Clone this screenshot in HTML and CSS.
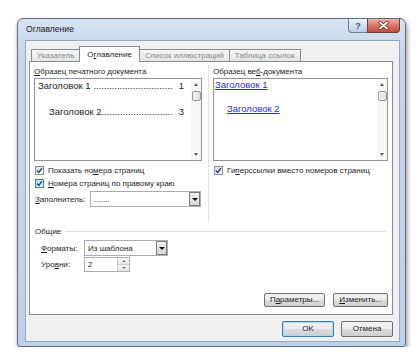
FILE: index.html
```html
<!DOCTYPE html>
<html lang="ru">
<head>
    <meta charset="UTF-8">
    <meta name="viewport" content="width=device-width, initial-scale=1">
    <title>Оглавление</title>
    <link rel="stylesheet" href="styles.css">
</head>
<body>

<div class="dialog">
    <div class="titlebar">
        <span class="title">Оглавление</span>
        <div class="caption-buttons">
            <span class="cap-btn help">?</span>
            <span class="cap-btn close">
                <svg width="11" height="9" viewBox="0 0 11 9">
                    <path d="M2 1.5 L9 7.5 M9 1.5 L2 7.5" stroke="#6b2b22" stroke-width="3.4" stroke-linecap="round"/>
                    <path d="M2 1.5 L9 7.5 M9 1.5 L2 7.5" stroke="#ffffff" stroke-width="1.8" stroke-linecap="round"/>
                </svg>
            </span>
        </div>
    </div>

    <div class="client">
        <div class="tabs">
            <div class="tab">Указатель</div>
            <div class="tab active">О<u>г</u>лавление</div>
            <div class="tab">Список иллюстраций</div>
            <div class="tab">Таблица ссылок</div>
        </div>

        <div class="panel">
            <div class="columns">
                <!-- Print preview -->
                <div class="col-print">
                    <div class="label"><u>О</u>бразец печатного документа</div>
                    <div class="preview">
                        <div class="preview-text">
                            <div class="toc-line"><span>Заголовок 1 ..............................</span><span>1</span></div>
                            <div class="toc-line level2"><span>Заголовок 2...........................</span><span>3</span></div>
                        </div>
                        <div class="scrollbar">
                            <span class="arrow up"></span>
                            <span class="thumb"></span>
                            <span class="arrow down"></span>
                        </div>
                    </div>
                    <div class="check first">
                        <span class="box"><svg width="7" height="7" viewBox="0 0 7 7"><path d="M1 3.6 L2.8 5.4 L6 1.2" stroke="#24418a" stroke-width="1.4" fill="none"/></svg></span>
                        Показать но<u>м</u>ера страниц
                    </div>
                    <div class="check">
                        <span class="box focus"><svg width="7" height="7" viewBox="0 0 7 7"><path d="M1 3.6 L2.8 5.4 L6 1.2" stroke="#24418a" stroke-width="1.4" fill="none"/></svg></span>
                        <span><u>Н</u>омера страниц по правому краю</span>
                    </div>
                    <div class="field-row filler">
                        <span class="field-label"><u>З</u>аполнитель:</span>
                        <div class="combo wide">
                            <span>.......</span>
                            <span class="combo-btn"><span class="tri"></span></span>
                        </div>
                    </div>
                </div>

                <!-- Web preview -->
                <div class="col-web">
                    <div class="label">Образец ве<u>б</u>-документа</div>
                    <div class="preview">
                        <div class="preview-text web">
                            <div class="web-link">Заголовок 1</div>
                            <div class="web-link level2">Заголовок 2</div>
                        </div>
                        <div class="scrollbar">
                            <span class="arrow up"></span>
                            <span class="thumb"></span>
                            <span class="arrow down"></span>
                        </div>
                    </div>
                    <div class="check first">
                        <span class="box"><svg width="7" height="7" viewBox="0 0 7 7"><path d="M1 3.6 L2.8 5.4 L6 1.2" stroke="#24418a" stroke-width="1.4" fill="none"/></svg></span>
                        <span>Ги<u>п</u>ерссылки вместо номеров страниц</span>
                    </div>
                </div>
            </div>

            <div class="general">
                <div class="group-title">Общие</div>
                <div class="field-row general-row">
                    <span class="field-label short"><u>Ф</u>орматы:</span>
                    <div class="combo formats">
                        <span>Из шаблона</span>
                        <span class="combo-btn"><span class="tri"></span></span>
                    </div>
                </div>
                <div class="field-row general-row levels">
                    <span class="field-label short">Уро<u>в</u>ни:</span>
                    <div class="spin">
                        <span>2</span>
                        <span class="spin-btns">
                            <span class="spin-btn"><span class="tri-up"></span></span>
                            <span class="spin-btn"><span class="tri-down"></span></span>
                        </span>
                    </div>
                </div>
            </div>

            <div class="panel-buttons">
                <button class="btn">П<u>а</u>раметры...</button>
                <button class="btn"><u>И</u>зменить...</button>
            </div>
        </div>

        <div class="dialog-buttons">
            <button class="btn btn-main default">OK</button>
            <button class="btn btn-main">Отмена</button>
        </div>
    </div>
</div>

</body>
</html>
```

FILE: styles.css
```css
body {
    margin: 0;
    background-color: #ffffff;
    font-family: "Liberation Sans", Arial, sans-serif;
    font-size: 8px;
    color: #1e1e1e;
}

u {
    text-decoration-thickness: 1px;
}

/* Window frame */
.dialog {
    box-sizing: border-box;
    width: 389px;
    height: 329px;
    margin: 18px 0 0 17px;
    display: flex;
    flex-direction: column;
    background: linear-gradient(#d6e3f2, #c3d6ec 40px, #bdd2ea);
    border: 1px solid #5d6e84;
    border-radius: 6px 6px 3px 3px;
    box-shadow: 1px 3px 5px rgba(0, 0, 0, 0.45);
}

.titlebar {
    height: 21px;
    display: flex;
    align-items: flex-start;
    padding-left: 8px;
}

.title {
    font-size: 8.6px;
    line-height: 21px;
    color: #1a1a1a;
}

.caption-buttons {
    margin-left: auto;
    margin-right: 5px;
    display: flex;
}

.cap-btn {
    box-sizing: border-box;
    height: 14px;
    display: flex;
    align-items: center;
    justify-content: center;
    border: 1px solid #6e7f94;
    border-top: none;
}

.help {
    width: 19px;
    border-right: none;
    border-radius: 0 0 0 4px;
    background: linear-gradient(#eef3f9, #d3dfed 50%, #bccde3);
    color: #44566f;
    font-size: 9px;
    font-weight: bold;
}

.close {
    width: 33px;
    border-color: #7a3a32;
    border-radius: 0 0 4px 0;
    background: linear-gradient(#ebb3a8, #d77a66 50%, #c4493a);
}

/* Client area */
.client {
    flex: 1;
    margin: 0 5px 4px 7px;
    background-color: #f0f0f0;
    border: 1px solid #93a8c3;
    padding: 5px 6px 4px 3px;
    display: flex;
    flex-direction: column;
}

.tabs {
    display: flex;
    align-items: flex-end;
    height: 16px;
    padding-left: 2px;
    margin-bottom: -1px;
}

.tab {
    box-sizing: border-box;
    height: 13px;
    line-height: 12px;
    padding: 0 5px;
    border: 1px solid #898c95;
    border-bottom: none;
    margin-right: -1px;
    background: linear-gradient(#f5f5f5, #e3e3e3);
    color: #8a8a8a;
}

.tab.active {
    height: 16px;
    line-height: 15px;
    padding: 0 7px;
    background: #ffffff;
    color: #1e1e1e;
    position: relative;
    z-index: 1;
}

.panel {
    box-sizing: border-box;
    height: 254px;
    background-color: #ffffff;
    border: 1px solid #898c95;
    padding: 0 4px 7px 4px;
    display: flex;
    flex-direction: column;
}

.columns {
    display: flex;
    height: 157px;
    margin-top: 3px;
}

.col-print {
    width: 168px;
    padding-top: 2px;
    margin-right: 6px;
}

.col-web {
    flex: 1;
    padding-top: 2px;
    padding-left: 4px;
    border-left: 1px solid #dde3e8;
}

.label {
    line-height: 10px;
}

/* Preview boxes */
.preview {
    box-sizing: border-box;
    height: 83px;
    margin-top: 1px;
    border: 1px solid #8f939b;
    display: flex;
}

.preview-text {
    flex: 1;
    padding: 1px 7px 0 3px;
    font-size: 9.5px;
    color: #222222;
}

.toc-line {
    display: flex;
    justify-content: space-between;
    line-height: 12px;
    white-space: nowrap;
}

.toc-line.level2 {
    margin-top: 14px;
    padding-left: 11px;
}

.preview-text.web {
    padding: 0 0 0 1px;
}

.web-link {
    line-height: 12px;
    color: #2b2bd4;
    text-decoration: underline;
}

.web-link.level2 {
    margin-top: 12px;
    padding-left: 12px;
}

.scrollbar {
    width: 10px;
    display: flex;
    flex-direction: column;
    align-items: center;
    background-color: #f7f7f7;
}

.arrow {
    width: 0;
    height: 0;
    border-left: 2.5px solid transparent;
    border-right: 2.5px solid transparent;
}

.arrow.up {
    margin-top: 4px;
    border-bottom: 3px solid #5a5a5a;
}

.arrow.down {
    margin-top: auto;
    margin-bottom: 4px;
    border-top: 3px solid #5a5a5a;
}

.thumb {
    box-sizing: border-box;
    width: 9px;
    height: 10px;
    margin-top: 5px;
    border: 1px solid #9a9a9a;
    border-radius: 2px;
    background: linear-gradient(90deg, #f4f4f4, #dcdcdc);
}

/* Checkboxes */
.check {
    display: flex;
    align-items: center;
    height: 13px;
    white-space: nowrap;
}

.check.first {
    margin-top: 3px;
}

.box {
    box-sizing: border-box;
    width: 9px;
    height: 9px;
    margin-left: 1px;
    margin-right: 4px;
    border: 1px solid #8e8f8f;
    background: linear-gradient(135deg, #dcdcdc, #f8f8f8);
    display: flex;
    align-items: center;
    justify-content: center;
}

.box.focus {
    border-color: #3c7fb1;
    background: linear-gradient(135deg, #bfe0f5, #eaf6fd);
}

/* Fields */
.field-row {
    display: flex;
    align-items: center;
}

.filler {
    margin-top: 1px;
}

.field-label {
    width: 56px;
    padding-left: 1px;
    box-sizing: border-box;
}

.field-label.short {
    width: 43px;
    padding-left: 0;
}

.combo,
.spin {
    box-sizing: border-box;
    height: 16px;
    border: 1px solid #abadb3;
    background-color: #ffffff;
    display: flex;
    align-items: center;
    padding-left: 3px;
}

.combo.wide {
    width: 111px;
}

.combo.formats {
    width: 84px;
}

.combo-btn {
    box-sizing: border-box;
    width: 11px;
    height: 14px;
    margin-left: auto;
    border: 1px solid #7b7b7b;
    background: linear-gradient(#f0f0f0, #d6d6d6);
    display: flex;
    align-items: center;
    justify-content: center;
}

.tri {
    width: 0;
    height: 0;
    border-left: 3px solid transparent;
    border-right: 3px solid transparent;
    border-top: 3px solid #111111;
}

.general {
    margin-top: 4px;
}

.group-title {
    display: flex;
    align-items: center;
    height: 10px;
    padding-left: 1px;
}

.group-title::after {
    content: "";
    flex: 1;
    margin-left: 4px;
    margin-right: 2px;
    border-top: 1px solid #d8dfe6;
}

.general-row {
    margin-top: 4px;
    padding-left: 7px;
}

.general-row.levels {
    margin-top: 1px;
}

.spin {
    width: 46px;
    height: 15px;
}

.spin-btns {
    margin-left: auto;
    width: 11px;
    height: 13px;
    display: flex;
    flex-direction: column;
    border-left: 1px solid #d0d0d0;
}

.spin-btn {
    flex: 1;
    display: flex;
    align-items: center;
    justify-content: center;
    background: linear-gradient(#f7f7f7, #e6e6e6);
}

.spin-btn + .spin-btn {
    border-top: 1px solid #d0d0d0;
}

.tri-up,
.tri-down {
    width: 0;
    height: 0;
    border-left: 2px solid transparent;
    border-right: 2px solid transparent;
}

.tri-up {
    border-bottom: 2px solid #7a7a7a;
}

.tri-down {
    border-top: 2px solid #7a7a7a;
}

/* Buttons */
.btn {
    box-sizing: border-box;
    height: 14px;
    padding: 0 5px;
    border: 1px solid #707070;
    border-radius: 2px;
    background: linear-gradient(#f2f2f2, #ebebeb 50%, #dddddd 50%, #cfcfcf);
    font-family: inherit;
    font-size: 8px;
    line-height: 12px;
    color: #1e1e1e;
}

.panel-buttons {
    margin-top: auto;
    display: flex;
    justify-content: flex-end;
    gap: 8px;
}

.dialog-buttons {
    margin-top: 6px;
    display: flex;
    justify-content: flex-end;
    gap: 7px;
}

.btn-main {
    width: 52px;
    height: 16px;
}

.btn.default {
    border-color: #3c7fb1;
    box-shadow: inset 0 0 0 1px #a6dcf7;
}
```
